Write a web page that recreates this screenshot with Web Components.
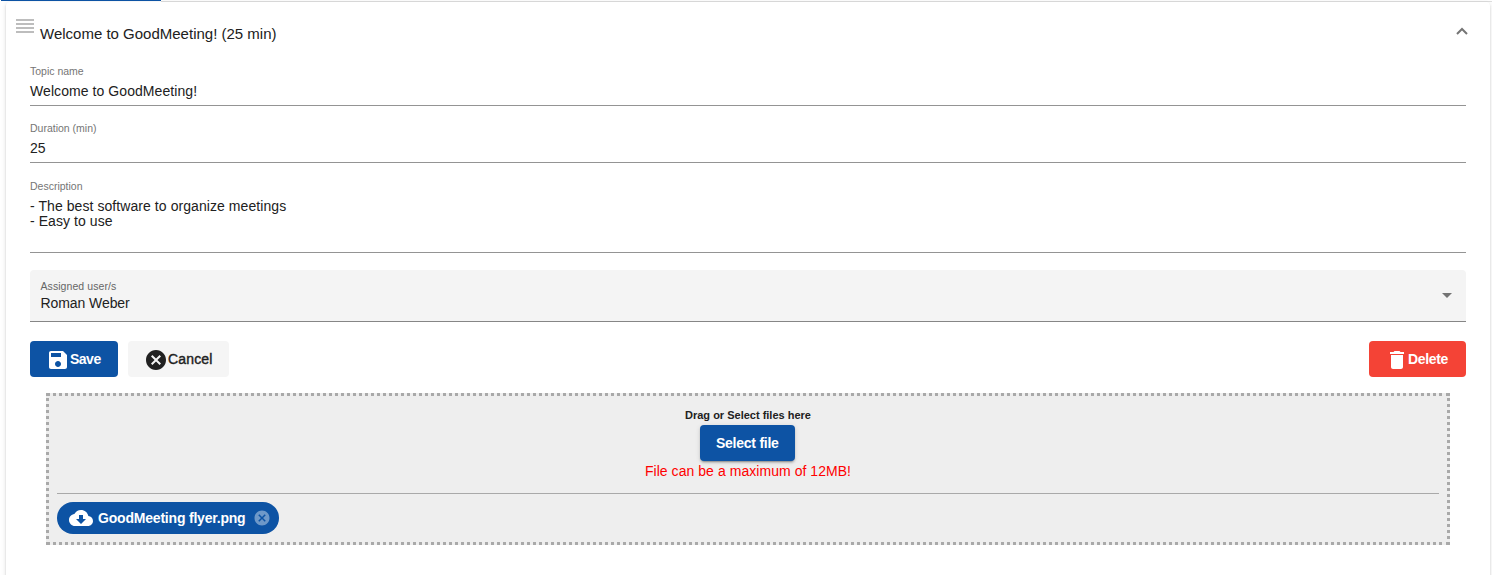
<!DOCTYPE html>
<html lang="en">
<head>
<meta charset="utf-8">
<title>GoodMeeting</title>
<style>
  body {
    margin: 0;
    height: 575px;
    overflow: hidden;
    background: #fff;
    color: #212121;
    font: 14px/18px "Liberation Sans", Arial, sans-serif;
  }
</style>
</head>
<body>
<tab-ink></tab-ink>
<topic-panel>
  <span slot="title">Welcome to GoodMeeting! (25 min)</span>
  <form-field label="Topic name">Welcome to GoodMeeting!</form-field>
  <form-field label="Duration (min)">25</form-field>
  <form-field label="Description" multiline>- The best software to organize meetings
- Easy to use</form-field>
  <select-field label="Assigned user/s">Roman Weber</select-field>
  <action-bar>
    <app-button color="primary" icon="save" style="--w: 88px; --ls: -.5px">Save</app-button>
    <app-button icon="cancel" style="--w: 101px; --ls: .15px">Cancel</app-button>
    <app-button slot="end" color="warn" icon="delete" style="--w: 97px; --ls: -.35px">Delete</app-button>
  </action-bar>
  <file-drop>
    <app-button color="primary" raised style="--w: 95px; --ls: -.25px">Select file</app-button>
    <file-chip slot="files">GoodMeeting flyer.png</file-chip>
  </file-drop>
</topic-panel>

<script>
const ICONS = {
  save: 'M17 3H5c-1.11 0-2 .9-2 2v14c0 1.1.89 2 2 2h14c1.1 0 2-.9 2-2V7l-4-4zm-5 16c-1.66 0-3-1.34-3-3s1.34-3 3-3 3 1.34 3 3-1.34 3-3 3zm3-10H5V5h10v4z',
  cancel: 'M12 2C6.47 2 2 6.47 2 12s4.47 10 10 10 10-4.47 10-10S17.53 2 12 2zm5 13.59L15.59 17 12 13.41 8.41 17 7 15.59 10.59 12 7 8.41 8.41 7 12 10.59 15.59 7 17 8.41 13.41 12 17 15.59z',
  delete: 'M6 19c0 1.1.9 2 2 2h8c1.1 0 2-.9 2-2V7H6v12zM19 4h-3.5l-1-1h-5l-1 1H5v2h14V4z',
  download: 'M19.35 10.04C18.67 6.59 15.64 4 12 4 9.11 4 6.6 5.64 5.35 8.04 2.34 8.36 0 10.91 0 14c0 3.31 2.69 6 6 6h13c2.76 0 5-2.24 5-5 0-2.64-2.05-4.78-4.65-4.96zM17 13l-5 5-5-5h3V9h4v4h3z'
};

function icon(name, size = 24) {
  return `<svg width="${size}" height="${size}" viewBox="0 0 24 24" fill="currentColor"><path d="${ICONS[name]}"/></svg>`;
}

// Active tab underline above the panel
class TabInk extends HTMLElement {
  constructor() {
    super();
    this.attachShadow({ mode: 'open' }).innerHTML = `
      <style>
        :host { display: block; height: 2px; background: linear-gradient(#dedede, #dedede) 161px 1px / 100% 1px no-repeat; }
        div { width: 160px; height: 1px; margin-left: 1px; float: left; background: #0d53a4; }
      </style>
      <div></div>
    `;
  }
}
customElements.define('tab-ink', TabInk);

class TopicPanel extends HTMLElement {
  constructor() {
    super();
    this.attachShadow({ mode: 'open' }).innerHTML = `
      <style>
        :host {
          display: block;
          box-sizing: border-box;
          height: 600px;
          margin: 0 2px 0 6px;
          padding: 0 24px;
          border-radius: 4px;
          background: #fff;
          box-shadow: 0 3px 1px -2px rgba(0,0,0,.2), 0 2px 2px rgba(0,0,0,.14), 0 1px 5px rgba(0,0,0,.12);
        }
        header { display: flex; align-items: flex-start; height: 60px; margin: 0 -6px 0 -14px; }
        .grip { width: 18px; height: 14px; margin: 17px 6px 0 0; background: repeating-linear-gradient(#bdbdbd 0 2px, transparent 2px 4px); }
        .title { flex: 1; margin-top: 23px; font-size: 15px; }
        .arrow { margin: 24px 3px 0 0; }
      </style>
      <header>
        <div class="grip"></div>
        <div class="title"><slot name="title"></slot></div>
        <svg class="arrow" width="14" height="10" viewBox="0 0 14 10" fill="none" stroke="#757575" stroke-width="2"><path d="M2 8l5-5 5 5"/></svg>
      </header>
      <slot></slot>
    `;
  }
}
customElements.define('topic-panel', TopicPanel);

class FormField extends HTMLElement {
  constructor() {
    super();
    this.attachShadow({ mode: 'open' });
  }

  connectedCallback() {
    this.shadowRoot.innerHTML = `
      <style>
        :host { display: block; box-sizing: border-box; height: 44px; margin-bottom: 13px; border-bottom: 1px solid #949494; }
        :host([multiline]) { height: 76px; margin: 14px 0 17px; }
        label { display: block; color: #757575; font-size: 10.5px; line-height: 18px; }
        .value { margin-top: 2px; white-space: pre; letter-spacing: .07px; }
        :host([multiline]) .value { margin-top: 4px; line-height: 15px; }
      </style>
      <label>${this.getAttribute('label')}</label>
      <div class="value"><slot></slot></div>
    `;
  }
}
customElements.define('form-field', FormField);

class SelectField extends HTMLElement {
  constructor() {
    super();
    this.attachShadow({ mode: 'open' });
  }

  connectedCallback() {
    this.shadowRoot.innerHTML = `
      <style>
        :host {
          display: flex;
          justify-content: space-between;
          box-sizing: border-box;
          height: 52px;
          padding: 7px 14px 0 10.5px;
          border-bottom: 1px solid #868686;
          border-radius: 4px 4px 0 0;
          background: #f4f4f4;
        }
        label { display: block; color: #666; font-size: 10.5px; line-height: 18px; letter-spacing: .07px; }
        .value { margin-top: -1px; letter-spacing: -.08px; }
        .arrow { margin-top: 16px; border: 5px solid transparent; border-top-color: #737373; border-bottom: 0; height: 0; }
      </style>
      <div>
        <label>${this.getAttribute('label')}</label>
        <div class="value"><slot></slot></div>
      </div>
      <div class="arrow"></div>
    `;
  }
}
customElements.define('select-field', SelectField);

class ActionBar extends HTMLElement {
  constructor() {
    super();
    this.attachShadow({ mode: 'open' }).innerHTML = `
      <style>
        :host { display: flex; justify-content: space-between; margin: 19px 0 16px; }
        div { display: flex; gap: 10px; }
      </style>
      <div><slot></slot></div>
      <slot name="end"></slot>
    `;
  }
}
customElements.define('action-bar', ActionBar);

class AppButton extends HTMLElement {
  constructor() {
    super();
    this.attachShadow({ mode: 'open' });
  }

  connectedCallback() {
    const name = this.getAttribute('icon');
    this.shadowRoot.innerHTML = `
      <style>
        :host { display: block; width: var(--w); }
        button {
          display: flex;
          align-items: center;
          width: 100%;
          height: 36px;
          padding: 0 0 0 16px;
          border: 0;
          border-radius: 4px;
          background: #f5f5f5;
          color: #212121;
          font: 14px/36px "Liberation Sans", Arial, sans-serif;
          letter-spacing: var(--ls, 0);
          -webkit-text-stroke: .4px currentColor;
          white-space: nowrap;
        }
        :host([color]) button { color: #fff; font-weight: bold; -webkit-text-stroke: 0; }
        :host([color=primary]) button { background: #0d53a4; }
        :host([color=warn]) button { background: #f44336; }
        :host([color=warn]) svg { margin-right: -1px; }
        :host([raised]) { margin-right: 1px; }
        :host([raised]) button { box-shadow: 0 3px 1px -2px rgba(0,0,0,.2), 0 2px 2px rgba(0,0,0,.14), 0 1px 5px rgba(0,0,0,.12); }
        svg { flex: none; margin-top: 2px; }
      </style>
      <button>${name ? icon(name) : ''}<slot></slot></button>
    `;
  }
}
customElements.define('app-button', AppButton);

class FileDrop extends HTMLElement {
  constructor() {
    super();
    this.attachShadow({ mode: 'open' }).innerHTML = `
      <style>
        :host {
          --dot: #a9a9a9 0 3px, transparent 3px 6px;
          --corner: linear-gradient(#a9a9a9, #a9a9a9);
          display: block;
          box-sizing: border-box;
          height: 152px;
          margin: 0 16px;
          padding: 13px 11px 0;
          background:
            var(--corner) 0 0 / 4px 3px no-repeat,
            var(--corner) 100% 0 / 4px 3px no-repeat,
            var(--corner) 0 100% / 4px 3px no-repeat,
            var(--corner) 100% 100% / 4px 3px no-repeat,
            repeating-linear-gradient(90deg, var(--dot)) 1px 0 / 1398px 3px no-repeat,
            repeating-linear-gradient(90deg, var(--dot)) 1px 100% / 1398px 3px no-repeat,
            repeating-linear-gradient(var(--dot)) 0 5px / 3px 144px no-repeat,
            repeating-linear-gradient(var(--dot)) 100% 5px / 3px 144px no-repeat,
            #eee;
        }
        .pick { display: flex; flex-direction: column; align-items: center; height: 87px; border-bottom: 1px solid #a9a9a9; }
        .hint { height: 19px; font-size: 11px; font-weight: bold; }
        .limit { margin-top: 1px; color: #f00; letter-spacing: .05px; }
        .files { display: flex; margin-top: 8px; }
      </style>
      <div class="pick">
        <div class="hint">Drag or Select files here</div>
        <slot></slot>
        <div class="limit">File can be a maximum of 12MB!</div>
      </div>
      <div class="files"><slot name="files"></slot></div>
    `;
  }
}
customElements.define('file-drop', FileDrop);

class FileChip extends HTMLElement {
  constructor() {
    super();
    this.attachShadow({ mode: 'open' }).innerHTML = `
      <style>
        :host {
          display: flex;
          align-items: center;
          box-sizing: border-box;
          width: 222px;
          height: 32px;
          padding: 0 8px 0 12px;
          border-radius: 16px;
          background: #0d53a4;
          color: #fff;
        }
        span { flex: 1; margin-left: 5px; font-weight: bold; letter-spacing: -.2px; white-space: nowrap; }
        .remove { display: flex; opacity: .4; }
      </style>
      ${icon('download')}
      <span><slot></slot></span>
      <div class="remove">${icon('cancel', 18)}</div>
    `;
  }
}
customElements.define('file-chip', FileChip);
</script>
</body>
</html>
